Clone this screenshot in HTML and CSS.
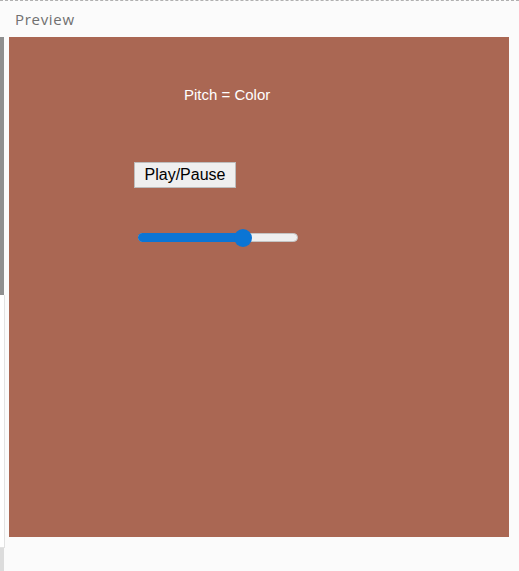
FILE: index.html
```html
<!DOCTYPE html>
<html>
<head>
<meta charset="utf-8">
<link rel="stylesheet" href="styles.css">
</head>
<body>
<div class="frame">
  <div class="title">Preview</div>
  <div class="row">
    <div class="side">
      <div class="side-thumb"></div>
      <div class="side-rest"></div>
      <div class="side-foot"></div>
    </div>
    <div class="main">
      <div class="canvas">
        <div class="label">Pitch = Color</div>
        <button class="btn">Play/Pause</button>
        <div class="slider">
          <div class="fill" style="width: 66%"></div>
          <div class="thumb" style="left: 66%"></div>
        </div>
      </div>
    </div>
  </div>
</div>
</body>
</html>
```
FILE: styles.css
```css
html, body {
  margin: 0;
  padding: 0;
  background: #fbfbfb;
}
.frame {
  width: 519px;
  height: 571px;
  border-top: 1px dashed #b0b0b0;
  box-sizing: border-box;
  overflow: hidden;
}
.title {
  height: 36px;
  box-sizing: border-box;
  padding: 9px 0 0 15px;
  font-family: "Open Sans", sans-serif;
  font-size: 15px;
  color: #707070;
  letter-spacing: 0.7px;
  line-height: 18px;
}
.row {
  display: flex;
  height: 534px;
}
.side {
  width: 5px;
  display: flex;
  flex-direction: column;
}
.side-thumb {
  height: 258px;
  width: 4px;
  background: #8f8f8f;
}
.side-rest {
  height: 252px;
  background: #ffffff;
  border-right: 1px solid #e2e2e2;
  border-bottom: 1px solid #e2e2e2;
}
.side-foot {
  flex: 1;
  width: 4px;
  background: #dcdcdc;
}
.main {
  padding-left: 4px;
}
.canvas {
  position: relative;
  width: 500px;
  height: 500px;
  background: #aa6753;
}
.label {
  position: absolute;
  left: 175px;
  top: 49px;
  font-family: "Liberation Sans", Arial, sans-serif;
  font-size: 15px;
  line-height: 17px;
  color: #ffffff;
}
.btn {
  position: absolute;
  left: 125px;
  top: 125px;
  width: 102px;
  height: 26px;
  margin: 0;
  padding: 0;
  background: #efefef;
  border: 1px solid #bdbdbd;
  border-radius: 0;
  font-family: "Liberation Sans", Arial, sans-serif;
  font-size: 16px;
  color: #000;
  line-height: 22px;
}
.slider {
  position: absolute;
  left: 129px;
  top: 196px;
  width: 160px;
  height: 9px;
  box-sizing: border-box;
  background: #efefef;
  border: 1px solid #c4c4c4;
  border-radius: 5px;
}
.fill {
  position: absolute;
  left: -1px;
  top: -1px;
  bottom: -1px;
  background: #0b75d5;
  border-radius: 5px 0 0 5px;
}
.thumb {
  position: absolute;
  top: 50%;
  width: 18px;
  height: 18px;
  margin-left: -9px;
  margin-top: -9px;
  border-radius: 50%;
  background: #0b75d5;
}
```
